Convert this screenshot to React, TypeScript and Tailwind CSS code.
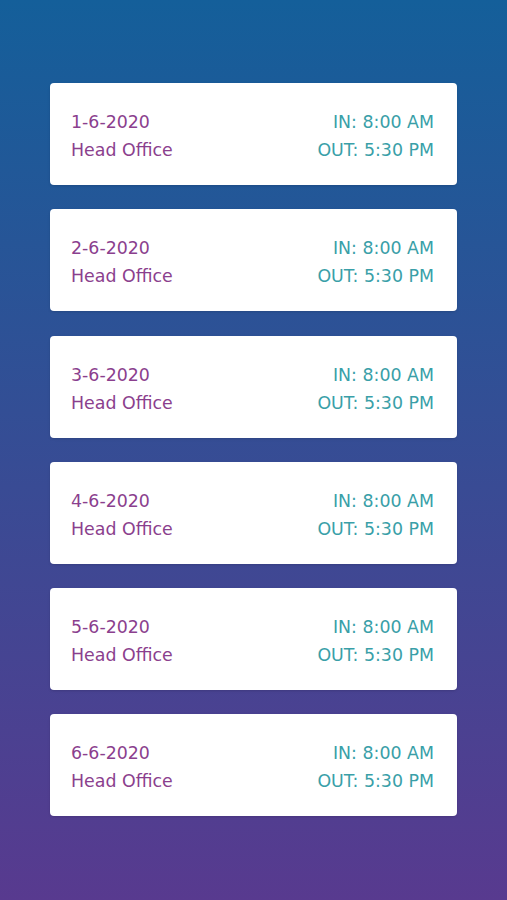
import React from 'react';

const entries = [
  { date: '1-6-2020', place: 'Head Office', timeIn: '8:00 AM', timeOut: '5:30 PM' },
  { date: '2-6-2020', place: 'Head Office', timeIn: '8:00 AM', timeOut: '5:30 PM' },
  { date: '3-6-2020', place: 'Head Office', timeIn: '8:00 AM', timeOut: '5:30 PM' },
  { date: '4-6-2020', place: 'Head Office', timeIn: '8:00 AM', timeOut: '5:30 PM' },
  { date: '5-6-2020', place: 'Head Office', timeIn: '8:00 AM', timeOut: '5:30 PM' },
  { date: '6-6-2020', place: 'Head Office', timeIn: '8:00 AM', timeOut: '5:30 PM' }
];

export default function App() {
  return (
    <div className="min-h-[900px] w-full bg-linear-to-b/srgb from-[#145f9a] to-[#583a8f] px-[50px] pt-[83px] font-['DejaVu_Sans',sans-serif]">
      <div className="flex flex-col gap-[24.3px]">
        {entries.map((entry, index) => (
          <div
            key={index}
            className="flex h-[102px] items-center justify-between rounded-[4px] bg-white pl-[21px] pr-[23px] pt-[4px] shadow-sm"
          >
            <div className="flex flex-col gap-[6px] text-[17.4px] leading-[22px] text-[#8b3f8e]">
              <span>{entry.date}</span>
              <span>{entry.place}</span>
            </div>
            <div className="flex flex-col items-end gap-[6px] text-[17.4px] leading-[22px] text-[#3a9fa8]">
              <span>IN: {entry.timeIn}</span>
              <span>OUT: {entry.timeOut}</span>
            </div>
          </div>
        ))}
      </div>
    </div>
  );
}
